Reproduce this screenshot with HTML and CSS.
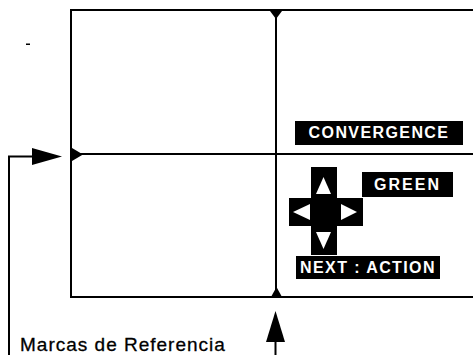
FILE: index.html
```html
<!DOCTYPE html>
<html>
<head>
<meta name="viewport" content="width=device-width, initial-scale=1">
<link rel="stylesheet" href="styles.css">
</head>
<body>

<div class="figure">
  <svg class="lines" width="473" height="355" viewBox="0 0 473 355">
    <!-- screen frame and centre cross -->
    <rect x="70" y="9" width="403" height="2"/>
    <rect x="70" y="9" width="2" height="289"/>
    <rect x="70" y="296" width="403" height="2"/>
    <rect x="275" y="9" width="2" height="289"/>
    <rect x="70" y="153" width="403" height="2"/>
    <!-- reference marks -->
    <polygon points="270,11 282,11 276,19"/>
    <polygon points="72,148 72,161 83,154.5"/>
    <polygon points="271,297 282,297 276.5,287"/>
    <!-- pointer arrows -->
    <polyline class="lead" points="9,355 9,156.5 33,156.5"/>
    <polygon points="32,148 32,165 62,156.5"/>
    <polygon points="266,342 285,342 275.5,311"/>
    <rect x="274.5" y="340" width="2" height="15"/>
    <rect x="26" y="43.5" width="4" height="1.5"/>
    <!-- d-pad -->
    <rect x="311" y="167" width="26" height="88"/>
    <rect x="289" y="198" width="74" height="28"/>
    <polygon class="white" points="316,194 331,194 323.5,177"/>
    <polygon class="white" points="316,232 331,232 323.5,249"/>
    <polygon class="white" points="310,204 310,220 293,212"/>
    <polygon class="white" points="341,204 341,220 357,212"/>
  </svg>

  <div class="osd osd-convergence">CONVERGENCE</div>
  <div class="osd osd-green">GREEN</div>
  <div class="osd osd-next">NEXT : ACTION</div>

  <div class="caption">Marcas de Referencia</div>
</div>

</body>
</html>
```

FILE: styles.css
```css
body {
  margin: 0;
  background: #fff;
  font-family: "Liberation Sans", Arial, Helvetica, sans-serif;
  color: #000;
}

.figure {
  position: relative;
  width: 473px;
  height: 355px;
  overflow: hidden;
}

.lines {
  position: absolute;
  left: 0;
  top: 0;
  fill: #000;
}

.lines .lead {
  fill: none;
  stroke: #000;
  stroke-width: 2;
}

.lines .white {
  fill: #fff;
}

/* on screen labels */
.osd {
  position: absolute;
  background: #000;
  color: #fff;
  font-weight: bold;
  font-size: 16px;
  letter-spacing: 1.4px;
  text-align: center;
  white-space: nowrap;
}

.osd-convergence {
  left: 295px;
  top: 121px;
  width: 168px;
  height: 24px;
  line-height: 24px;
}

.osd-green {
  left: 362px;
  top: 172px;
  width: 91px;
  height: 25px;
  line-height: 25px;
  letter-spacing: 2px;
}

.osd-next {
  left: 296px;
  top: 256px;
  width: 144px;
  height: 23px;
  line-height: 23px;
}

.caption {
  position: absolute;
  left: 20px;
  top: 335px;
  font-size: 19px;
  line-height: 19px;
  letter-spacing: 1px;
  white-space: nowrap;
  -webkit-text-stroke: 0.3px #000;
}
```
